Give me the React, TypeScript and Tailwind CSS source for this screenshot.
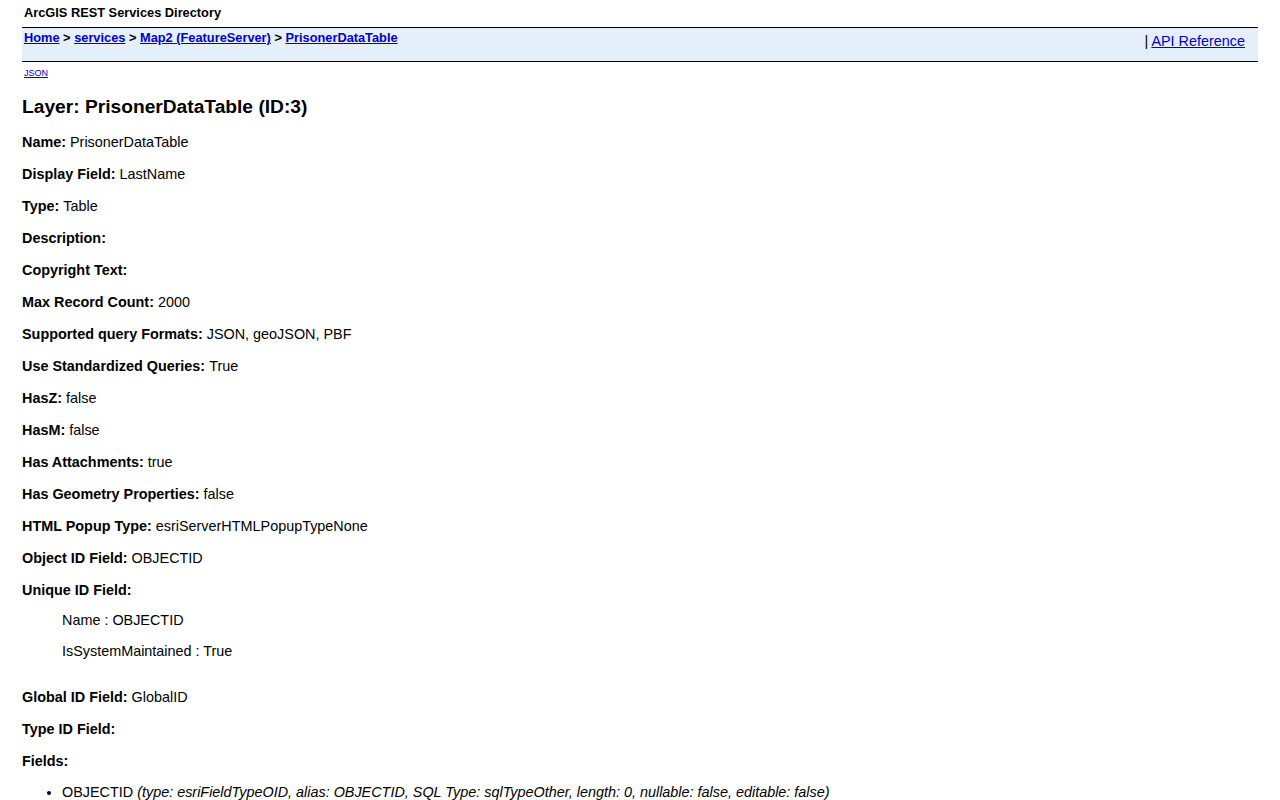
const fields: [string, string][] = [
  ['Name', 'PrisonerDataTable'],
  ['Display Field', 'LastName'],
  ['Type', 'Table'],
  ['Description', ''],
  ['Copyright Text', ''],
  ['Max Record Count', '2000'],
  ['Supported query Formats', 'JSON, geoJSON, PBF'],
  ['Use Standardized Queries', 'True'],
  ['HasZ', 'false'],
  ['HasM', 'false'],
  ['Has Attachments', 'true'],
  ['Has Geometry Properties', 'false'],
  ['HTML Popup Type', 'esriServerHTMLPopupTypeNone'],
  ['Object ID Field', 'OBJECTID'],
];

function Row({ label, value }: { label: string; value?: string }) {
  return (
    <div className="h-[32px] flex items-center text-[14.4px] leading-[17px]">
      <b>{label}:</b>
      {value ? <span>&nbsp;{value}</span> : null}
    </div>
  );
}

export default function App() {
  return (
    <div className="min-h-screen bg-white text-black pl-[22px] pr-[22px] font-['Liberation_Sans',Arial,sans-serif]">
      <div className="pt-[5px] pb-[7px] pl-[2px] text-[12.8px] font-bold leading-[15px]">ArcGIS REST Services Directory</div>
      <div className="border-t border-b border-black bg-[#e5effa] h-[35px] flex justify-between pl-[2px] pr-[13px]">
        <div className="pt-[2px] text-[12.8px] font-bold leading-[15px]">
          <a href="#" className="text-[#0000cc] underline">Home</a> &gt;{' '}
          <a href="#" className="text-[#0000cc] underline">services</a> &gt;{' '}
          <a href="#" className="text-[#0000cc] underline">Map2 (FeatureServer)</a> &gt;{' '}
          <a href="#" className="text-[#0000cc] underline">PrisonerDataTable</a>
        </div>
        <div className="pt-[5px] text-[14.4px] leading-[16px]">
          | <a href="#" className="text-[#0000cc] underline">API Reference</a>
        </div>
      </div>
      <div className="pt-[6px] pl-[2px] text-[9px] leading-[10px]">
        <a href="#" className="text-[#0000cc] underline">JSON</a>
      </div>
      <h2 className="mt-[18px] mb-[8px] text-[19.2px] font-bold leading-[22px]">Layer: PrisonerDataTable (ID:3)</h2>
      <div className="flex flex-col">
        {fields.map(([l, v]) => (
          <Row key={l} label={l} value={v} />
        ))}
        <Row label="Unique ID Field" />
        <div className="-mt-[1px] pl-[40px] text-[14.4px] leading-[17px]">
          <div className="h-[31px] flex items-center">Name : OBJECTID</div>
          <div className="h-[31px] flex items-center">IsSystemMaintained : True</div>
        </div>
        <div className="h-[14px]" />
        <Row label="Global ID Field" value="GlobalID" />
        <Row label="Type ID Field" />
        <Row label="Fields" />
        <ul className="list-disc pl-[40px] pt-[7px] text-[14.4px] leading-[17px]">
          <li>
            OBJECTID <i>(type: esriFieldTypeOID, alias: OBJECTID, SQL Type: sqlTypeOther, length: 0, nullable: false, editable: false)</i>
          </li>
          <li className="mt-[12px]">
            GlobalID <i>(type: esriFieldTypeGlobalID, alias: GlobalID, SQL Type: sqlTypeOther, length: 38, nullable: false, editable: false)</i>
          </li>
        </ul>
      </div>
    </div>
  );
}
